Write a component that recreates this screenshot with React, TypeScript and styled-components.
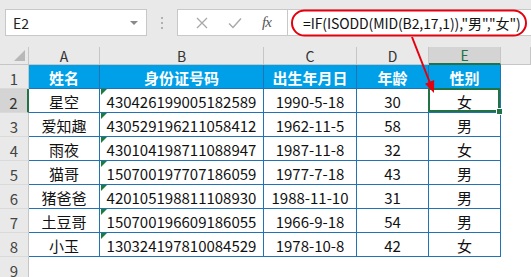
import React from 'react'
import styled, { createGlobalStyle, css } from 'styled-components'

const GlobalStyle = createGlobalStyle`
  html, body {
    margin: 0;
    padding: 0;
    background: #ffffff;
  }
  body {
    font-family: "Noto Sans CJK SC", "Noto Sans", sans-serif;
    overflow: hidden;
  }
`

const FONT = `"Noto Sans CJK SC", "Noto Sans", sans-serif`
const TABLE_LINE = '#2173b5'
const HEAD_GRAY = '#e9e9e9'
const SEL_GRAY = '#d4d4d4'
const EXCEL_GREEN = '#217346'

const Screen = styled.div`
  position: relative;
  width: 531px;
  height: 277px;
  overflow: hidden;
  background: #ffffff;
`

const FormulaBar = styled.div`
  display: flex;
  align-items: flex-start;
  height: 47px;
  box-sizing: border-box;
  padding: 9px 0 0 5px;
  background: ${HEAD_GRAY};
`

const Box = css`
  box-sizing: border-box;
  flex-shrink: 0;
  height: 27px;
  background: #ffffff;
  border: 1px solid #c8c8c8;
  display: flex;
  align-items: center;
`

const NameBox = styled.div`
  ${Box}
  width: 142px;
  padding: 0 8px 0 7px;
  justify-content: space-between;
  font-family: ${FONT};
  font-size: 14px;
  color: #222;
`

const DropArrow = styled.span`
  width: 0;
  height: 0;
  border-left: 4px solid transparent;
  border-right: 4px solid transparent;
  border-top: 4px solid #8a8a8a;
`

const Splitter = styled.div`
  flex-shrink: 0;
  width: 30px;
  height: 27px;
  display: flex;
  flex-direction: column;
  align-items: center;
  justify-content: center;
  gap: 3px;

  span {
    width: 2px;
    height: 2px;
    background: #b0b0b0;
  }
`

const FxBox = styled.div`
  ${Box}
  width: 110px;
  border-right: none;
  justify-content: space-around;
  padding: 0 6px 0 8px;
  color: #a8a8a8;
`

const FxLabel = styled.span`
  font-family: "Liberation Serif", serif;
  font-style: italic;
  font-size: 15px;
  color: #555;
  letter-spacing: -1px;
`

const FormulaInput = styled.div`
  ${Box}
  flex: 1 1 auto;
  min-width: 0;
  overflow: hidden;
  border-right: none;
  padding-left: 15px;
  font-family: ${FONT};
  font-size: 14px;
  letter-spacing: -0.1px;
  color: #111;
  white-space: nowrap;
`

const Sheet = styled.div`
  display: grid;
  grid-template-columns: 29px 71px 164px 93px 72px 72px 1fr;
  grid-template-rows: 18px repeat(9, 24px);
`

const Corner = styled.div`
  position: relative;
  background: ${HEAD_GRAY};
  border-right: 1px solid #c6c6c6;
  border-bottom: 1px solid #c6c6c6;

  &::after {
    content: '';
    position: absolute;
    right: 3px;
    bottom: 3px;
    width: 0;
    height: 0;
    border-left: 11px solid transparent;
    border-bottom: 11px solid #b8b8b8;
  }
`

const ColHead = styled.div<{ $active?: boolean }>`
  box-sizing: border-box;
  display: flex;
  align-items: center;
  justify-content: center;
  font-family: ${FONT};
  font-size: 14px;
  background: ${({ $active }) => ($active ? SEL_GRAY : HEAD_GRAY)};
  color: ${({ $active }) => ($active ? EXCEL_GREEN : '#333')};
  border-right: 1px solid #c6c6c6;
  border-bottom: ${({ $active }) => ($active ? `2px solid ${EXCEL_GREEN}` : '1px solid #c6c6c6')};
`

const RowHead = styled.div<{ $active?: boolean }>`
  box-sizing: border-box;
  display: flex;
  align-items: center;
  justify-content: center;
  padding-top: 3px;
  font-family: ${FONT};
  font-size: 15px;
  background: ${({ $active }) => ($active ? SEL_GRAY : HEAD_GRAY)};
  color: ${({ $active }) => ($active ? '#333' : '#444')};
  border-right: ${({ $active }) => ($active ? `2px solid ${EXCEL_GREEN}` : '1px solid #c6c6c6')};
  border-bottom: 1px solid #dadada;
`

const Cell = styled.div<{ $head?: boolean; $flag?: boolean; $selected?: boolean }>`
  position: relative;
  box-sizing: border-box;
  display: flex;
  align-items: center;
  justify-content: center;
  padding-top: 2px;
  font-family: ${FONT};
  font-size: 15px;
  font-weight: ${({ $head }) => ($head ? 700 : 400)};
  color: ${({ $head }) => ($head ? '#ffffff' : '#111')};
  background: ${({ $head }) => ($head ? '#00a0e9' : '#ffffff')};
  border-right: 1px solid ${TABLE_LINE};
  border-bottom: 1px solid ${TABLE_LINE};
  white-space: nowrap;

  ${({ $flag }) =>
    $flag &&
    css`
      &::before {
        content: '';
        position: absolute;
        left: 1px;
        top: 0;
        width: 0;
        height: 0;
        border-top: 6px solid #1e7b3c;
        border-right: 6px solid transparent;
      }
    `}

  ${({ $selected }) =>
    $selected &&
    css`
      &::after {
        content: '';
        position: absolute;
        inset: -1px 0 0 -1px;
        border: 2px solid ${EXCEL_GREEN};
      }
      &::before {
        content: '';
        position: absolute;
        right: -3px;
        bottom: -3px;
        width: 5px;
        height: 5px;
        background: ${EXCEL_GREEN};
        border: 1px solid #ffffff;
        z-index: 2;
      }
    `}
`

const Blank = styled.div``

const Overlay = styled.svg`
  position: absolute;
  left: 0;
  top: 0;
  pointer-events: none;
`

const header = ['姓名', '身份证号码', '出生年月日', '年龄', '性别']

const rows = [
  ['星空', '430426199005182589', '1990-5-18', '30', '女'],
  ['爱知趣', '430529196211058412', '1962-11-5', '58', '男'],
  ['雨夜', '430104198711088947', '1987-11-8', '32', '女'],
  ['猫哥', '150700197707186059', '1977-7-18', '43', '男'],
  ['猪爸爸', '420105198811108930', '1988-11-10', '31', '男'],
  ['土豆哥', '150700196609186055', '1966-9-18', '54', '男'],
  ['小玉', '130324197810084529', '1978-10-8', '42', '女'],
]

const columns = ['A', 'B', 'C', 'D', 'E', '']

export default function App() {
  return (
    <Screen>
      <GlobalStyle />
      <FormulaBar>
        <NameBox>
          <span>E2</span>
          <DropArrow />
        </NameBox>
        <Splitter>
          <span />
          <span />
          <span />
        </Splitter>
        <FxBox>
          <svg width="12" height="12" viewBox="0 0 12 12">
            <path d="M1 1 L11 11 M11 1 L1 11" stroke="#a8a8a8" strokeWidth="1.3" fill="none" />
          </svg>
          <svg width="14" height="12" viewBox="0 0 14 12">
            <path d="M1 6.5 L5 10.5 L13 1.5" stroke="#a8a8a8" strokeWidth="1.4" fill="none" />
          </svg>
          <FxLabel>fx</FxLabel>
        </FxBox>
        <FormulaInput>=IF(ISODD(MID(B2,17,1)),"男","女")</FormulaInput>
      </FormulaBar>

      <Sheet>
        <Corner />
        {columns.map((c, i) => (
          <ColHead key={i} $active={c === 'E'}>
            {c}
          </ColHead>
        ))}

        <RowHead>1</RowHead>
        {header.map((h) => (
          <Cell key={h} $head>
            {h}
          </Cell>
        ))}
        <Blank />

        {rows.map((r, ri) => (
          <React.Fragment key={ri}>
            <RowHead $active={ri === 0}>{ri + 2}</RowHead>
            {r.map((v, ci) => (
              <Cell key={ci} $flag={ci === 1} $selected={ri === 0 && ci === 4}>
                {v}
              </Cell>
            ))}
            <Blank />
          </React.Fragment>
        ))}

        <RowHead>9</RowHead>
      </Sheet>

      <Overlay width="531" height="277" viewBox="0 0 531 277">
        <rect x="292" y="10.5" width="234" height="25" rx="12.5" fill="none" stroke="#e3000f" strokeWidth="2" />
        <line x1="412" y1="37" x2="430" y2="83" stroke="#e3000f" strokeWidth="2" />
        <polygon points="434,93 434.2,80 425,83.8" fill="#e3000f" />
      </Overlay>
    </Screen>
  )
}
